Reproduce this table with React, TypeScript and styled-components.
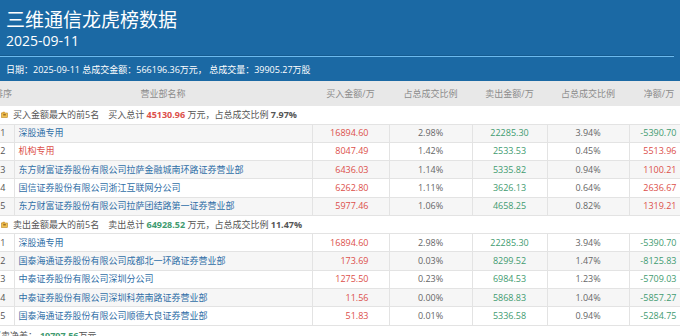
import React from 'react';
import styled, { createGlobalStyle } from 'styled-components';

const GlobalStyle = createGlobalStyle`
  html, body {
    margin: 0;
    padding: 0;
    background: #ffffff;
    overflow: hidden;
  }
  body {
    font-family: 'Open Sans', 'Noto Sans CJK SC', sans-serif;
    font-size: 9px;
    color: #555;
  }
`;

const RED = '#dc4f4a';
const GREEN = '#3f9b70';
const BLUE = '#2f6ea6';

type Row = [number, string, string, string, string, string, string];

const buyRows: Row[] = [
  [1, '深股通专用', '16894.60', '2.98%', '22285.30', '3.94%', '-5390.70'],
  [2, '机构专用', '8047.49', '1.42%', '2533.53', '0.45%', '5513.96'],
  [3, '东方财富证券股份有限公司拉萨金融城南环路证券营业部', '6436.03', '1.14%', '5335.82', '0.94%', '1100.21'],
  [4, '国信证券股份有限公司浙江互联网分公司', '6262.80', '1.11%', '3626.13', '0.64%', '2636.67'],
  [5, '东方财富证券股份有限公司拉萨团结路第一证券营业部', '5977.46', '1.06%', '4658.25', '0.82%', '1319.21'],
];

const sellRows: Row[] = [
  [1, '深股通专用', '16894.60', '2.98%', '22285.30', '3.94%', '-5390.70'],
  [2, '国泰海通证券股份有限公司成都北一环路证券营业部', '173.69', '0.03%', '8299.52', '1.47%', '-8125.83'],
  [3, '中泰证券股份有限公司深圳分公司', '1275.50', '0.23%', '6984.53', '1.23%', '-5709.03'],
  [4, '中泰证券股份有限公司深圳科苑南路证券营业部', '11.56', '0.00%', '5868.83', '1.04%', '-5857.27'],
  [5, '国泰海通证券股份有限公司顺德大良证券营业部', '51.83', '0.01%', '5336.58', '0.94%', '-5284.75'],
];

const Header = styled.header`
  background: #1b69a4;
  color: #ffffff;
  padding: 8px 6px 5px 6px;
`;

const Title = styled.h1`
  margin: 0;
  font-size: 19px;
  line-height: 24px;
  font-weight: 400;
`;

const DateLine = styled.div`
  font-size: 14px;
  line-height: 18px;
`;

const Divider = styled.div`
  height: 2px;
  margin: 5px 0 0 -6px;
  background: #6cbaee;
  border-top: 1px solid #155b90;
  box-sizing: border-box;
`;

const Info = styled.div`
  margin-top: 7px;
  font-size: 9px;
  line-height: 12px;
`;

const Viewport = styled.div`
  overflow: hidden;
`;

const Shifted = styled.div`
  margin-left: -8px;
  width: 697px;
`;

const Table = styled.table`
  width: 697px;
  table-layout: fixed;
  border-collapse: collapse;
`;

const HeadRow = styled.tr`
  height: 25px;
  background: #e8e8e8;
`;

const Th = styled.th<{ $align?: string; $pr?: number }>`
  padding: 0 ${(p) => p.$pr ?? 0}px 0 0;
  font-weight: 400;
  color: #8c8c8c;
  font-size: 9px;
  text-align: ${(p) => p.$align ?? 'center'};
  white-space: nowrap;
  overflow: visible;
`;

const SectionRow = styled.tr`
  height: 18px;
`;

const SectionCell = styled.td`
  padding: 0 0 0 9px;
  white-space: nowrap;
  color: #555;
`;

const SectionInner = styled.div`
  display: flex;
  align-items: center;
  gap: 5px;
`;

const Gap = styled.span`
  display: inline-block;
  width: 9px;
`;

const Strong = styled.b<{ $color?: string }>`
  font-weight: 700;
  color: ${(p) => p.$color ?? '#555'};
`;

const DataRow = styled.tr<{ $striped: boolean }>`
  height: 18.33px;
  background: ${(p) => (p.$striped ? '#f6f6f6' : '#ffffff')};
`;

const Td = styled.td<{ $align?: string; $color?: string; $pl?: number; $pr?: number }>`
  border: 1px solid #e3e3e3;
  padding: 0 ${(p) => p.$pr ?? 0}px 0 ${(p) => p.$pl ?? 0}px;
  line-height: 12px;
  text-align: ${(p) => p.$align ?? 'center'};
  color: ${(p) => p.$color ?? '#666'};
  white-space: nowrap;
  overflow: hidden;
`;

const RankTd = styled(Td)`
  border-left: none;
  color: #555;
`;

const Footer = styled.div`
  margin-top: 4px;
  line-height: 12px;
  color: #555;
  white-space: nowrap;
`;

const SectionIcon = () => (
  <svg width="7" height="7" viewBox="0 0 7 7">
    <rect x="0.5" y="2" width="6" height="4.5" fill="#f2c14e" stroke="#b8862a" strokeWidth="0.6" />
    <path d="M1 2 L2 0.8 L3.6 0.8 L4.2 2 Z" fill="#d9a236" />
    <rect x="2.2" y="3.2" width="2.6" height="1.2" fill="#8a5d1c" />
  </svg>
);

const numColor = (v: string) => (v.startsWith('-') ? GREEN : RED);

const Section: React.FC<{
  label: string;
  totalLabel: string;
  total: string;
  totalColor: string;
  ratio: string;
  rows: Row[];
  stripeOdd: boolean;
}> = ({ label, totalLabel, total, totalColor, ratio, rows, stripeOdd }) => (
  <>
    <SectionRow>
      <SectionCell colSpan={7}>
        <SectionInner>
          <SectionIcon />
          <span>
            {label}
            <Gap />
            {totalLabel} <Strong $color={totalColor}>{total}</Strong> 万元，占总成交比例{' '}
            <Strong>{ratio}</Strong>
          </span>
        </SectionInner>
      </SectionCell>
    </SectionRow>
    {rows.map((r) => (
      <DataRow key={r[0]} $striped={stripeOdd ? r[0] % 2 === 1 : r[0] % 2 === 0}>
        <RankTd>{r[0]}</RankTd>
        <Td $align="left" $pl={4} $color={r[1] === '机构专用' ? RED : BLUE}>
          {r[1]}
        </Td>
        <Td $align="right" $pr={20} $color={RED}>
          {r[2]}
        </Td>
        <Td>{r[3]}</Td>
        <Td $color={GREEN}>{r[4]}</Td>
        <Td>{r[5]}</Td>
        <Td $align="right" $pr={12} $color={numColor(r[6])}>
          {r[6]}
        </Td>
      </DataRow>
    ))}
  </>
);

export default function App() {
  return (
    <>
      <GlobalStyle />
      <Header>
        <Title>三维通信龙虎榜数据</Title>
        <DateLine>2025-09-11</DateLine>
        <Divider />
        <Info>日期：2025-09-11 总成交金额：566196.36万元， 总成交量：39905.27万股</Info>
      </Header>
      <Viewport>
        <Shifted>
          <Table>
            <colgroup>
              <col style={{ width: 22 }} />
              <col style={{ width: 298 }} />
              <col style={{ width: 77 }} />
              <col style={{ width: 83 }} />
              <col style={{ width: 75 }} />
              <col style={{ width: 82 }} />
              <col style={{ width: 60 }} />
            </colgroup>
            <thead>
              <HeadRow>
                <Th>排序</Th>
                <Th>营业部名称</Th>
                <Th>买入金额/万</Th>
                <Th>占总成交比例</Th>
                <Th>卖出金额/万</Th>
                <Th>占总成交比例</Th>
                <Th>净额/万</Th>
              </HeadRow>
            </thead>
            <tbody>
              <Section
                label="买入金额最大的前5名"
                totalLabel="买入总计"
                total="45130.96"
                totalColor={RED}
                ratio="7.97%"
                rows={buyRows}
                stripeOdd
              />
              <Section
                label="卖出金额最大的前5名"
                totalLabel="卖出总计"
                total="64928.52"
                totalColor={GREEN}
                ratio="11.47%"
                rows={sellRows}
                stripeOdd={false}
              />
            </tbody>
          </Table>
          <Footer>
            买卖净差：<Strong $color={GREEN}>-19797.56</Strong>万元
          </Footer>
        </Shifted>
      </Viewport>
    </>
  );
}
